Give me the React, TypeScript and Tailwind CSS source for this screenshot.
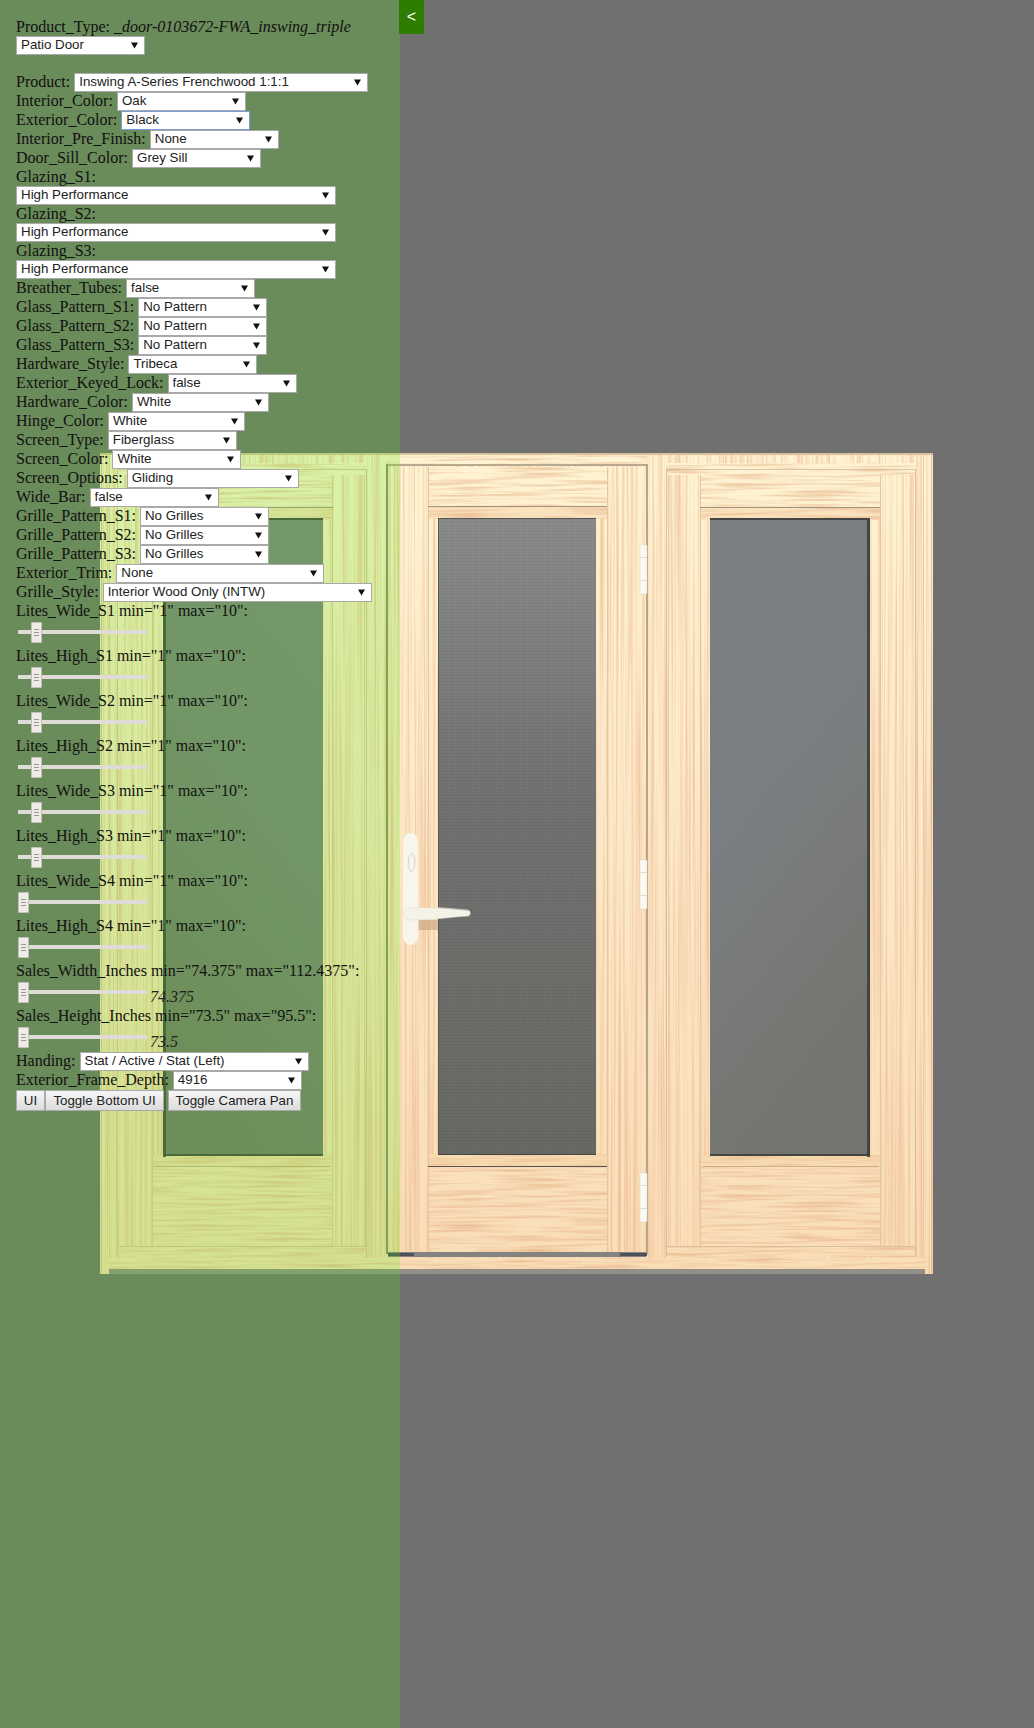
import React from "react";

const ROWS_A = [
  { label: "Interior_Color:", value: "Oak", w: "w-[129px]" },
  { label: "Exterior_Color:", value: "Black", w: "w-[129px]", focus: true },
  { label: "Interior_Pre_Finish:", value: "None", w: "w-[129px]" },
  { label: "Door_Sill_Color:", value: "Grey Sill", w: "w-[129px]" },
];

const ROWS_B = [
  { label: "Breather_Tubes:", value: "false", w: "w-[129px]" },
  { label: "Glass_Pattern_S1:", value: "No Pattern", w: "w-[129px]" },
  { label: "Glass_Pattern_S2:", value: "No Pattern", w: "w-[129px]" },
  { label: "Glass_Pattern_S3:", value: "No Pattern", w: "w-[129px]" },
  { label: "Hardware_Style:", value: "Tribeca", w: "w-[129px]" },
  { label: "Exterior_Keyed_Lock:", value: "false", w: "w-[129px]" },
  { label: "Hardware_Color:", value: "White", w: "w-[137px]" },
  { label: "Hinge_Color:", value: "White", w: "w-[137px]" },
  { label: "Screen_Type:", value: "Fiberglass", w: "w-[129px]" },
  { label: "Screen_Color:", value: "White", w: "w-[129px]" },
  { label: "Screen_Options:", value: "Gliding", w: "w-[172px]" },
  { label: "Wide_Bar:", value: "false", w: "w-[129px]" },
  { label: "Grille_Pattern_S1:", value: "No Grilles", w: "w-[129px]" },
  { label: "Grille_Pattern_S2:", value: "No Grilles", w: "w-[129px]" },
  { label: "Grille_Pattern_S3:", value: "No Grilles", w: "w-[129px]" },
  { label: "Exterior_Trim:", value: "None", w: "w-[208px]" },
  { label: "Grille_Style:", value: "Interior Wood Only (INTW)", w: "w-[269px]" },
];

const SLIDERS = [
  { label: 'Lites_Wide_S1 min="1" max="10":', at: "ml-[13px]" },
  { label: 'Lites_High_S1 min="1" max="10":', at: "ml-[13px]" },
  { label: 'Lites_Wide_S2 min="1" max="10":', at: "ml-[13px]" },
  { label: 'Lites_High_S2 min="1" max="10":', at: "ml-[13px]" },
  { label: 'Lites_Wide_S3 min="1" max="10":', at: "ml-[13px]" },
  { label: 'Lites_High_S3 min="1" max="10":', at: "ml-[13px]" },
  { label: 'Lites_Wide_S4 min="1" max="10":', at: "ml-0" },
  { label: 'Lites_High_S4 min="1" max="10":', at: "ml-0" },
  { label: 'Sales_Width_Inches min="74.375" max="112.4375":', at: "ml-0", value: "74.375" },
  { label: 'Sales_Height_Inches min="73.5" max="95.5":', at: "ml-0", value: "73.5" },
];

function Sel({ value, w, focus }: { value: string; w: string; focus?: boolean }) {
  return (
    <span className={`relative block h-[19px] shrink-0 ${w}`}>
      <select
        defaultValue={value}
        className={`block w-full h-full appearance-none rounded-none bg-white pl-[4px] pb-[2px] leading-[15px] font-['Liberation_Sans',Arial,sans-serif] text-[13.33px] text-[#222] outline-none border ${
          focus ? "border-[#7a9cd6]" : "border-[#a9a9a9]"
        }`}
      >
        <option>{value}</option>
      </select>
      <svg className="absolute right-[7px] top-[6px] w-[7px] h-[7px] pointer-events-none" viewBox="0 0 7 7">
        <path d="M0 0.5h7L3.5 6.5z" fill="#111" />
      </svg>
    </span>
  );
}

function Row({ label, value, w, focus }: { label: string; value: string; w: string; focus?: boolean }) {
  return (
    <div className="flex items-center h-[19px] gap-[4px] whitespace-nowrap">
      <span className="pb-[2px]">{label}</span>
      <Sel value={value} w={w} focus={focus} />
    </div>
  );
}

function Stacked({ label }: { label: string }) {
  return (
    <div>
      <div className="h-[18px] leading-[18px]">{label}</div>
      <Sel value="High Performance" w="w-[320px]" />
    </div>
  );
}

function Slider({ label, at, value }: { label: string; at: string; value?: string }) {
  return (
    <div>
      <div className="h-[18px] leading-[18px] whitespace-nowrap">{label}</div>
      <div className="flex h-[27px] pl-[2px] pt-[2px]">
        <div className="relative w-[129px] h-[21px]">
          <div className="absolute left-0 right-0 top-[8px] h-[4px] bg-[#dfdcd8]" />
          <div
            className={`relative w-[11px] h-[21px] flex flex-col items-center justify-center gap-[2px] rounded-[1px] border border-[#c3c0bb] bg-[#efecE8] ${at}`}
          >
            <span className="block w-[5px] h-px bg-[#9a9895]" />
            <span className="block w-[5px] h-px bg-[#9a9895]" />
            <span className="block w-[5px] h-px bg-[#9a9895]" />
          </div>
        </div>
        {value && <i className="ml-[3px] mt-[6px] h-[18px] leading-[18px] text-[#222]">{value}</i>}
      </div>
    </div>
  );
}

const BTN =
  "h-[21px] border border-[#a9a9a9] bg-gradient-to-b from-[#f6f6f6] to-[#dcdcdc] font-['Liberation_Sans',Arial,sans-serif] text-[13.33px] text-[#222]";

// one side light of the triple door, drawn at its right-hand coordinates
function SideLight({ id }: { id: string }) {
  return (
    <g>
      <g filter={`url(#woodV${id})`}>
        <rect x="647" y="453" width="286" height="821" fill="url(#woodBase)" />
      </g>
      <g filter={`url(#woodH${id})`}>
        <rect x="666" y="463" width="250" height="12" fill="url(#woodBase)" />
        <rect x="700" y="475" width="180" height="32" fill="url(#woodBase)" />
        <rect x="700" y="508" width="180" height="12" fill="#f9e2bc" />
        <rect x="700" y="1155" width="180" height="12" fill="#f8dcb2" />
        <rect x="700" y="1167" width="180" height="79" fill="url(#woodBase)" />
        <rect x="666" y="1246" width="250" height="11" fill="url(#woodBase)" />
      </g>
      <rect x="647" y="453" width="286" height="2" fill="#d9bf9c" />
      <rect x="666" y="469" width="250" height="1" fill="#cdb593" opacity="0.7" />
      <rect x="666" y="470" width="1" height="787" fill="#d8c09c" />
      <rect x="915" y="470" width="1" height="787" fill="#d8c09c" />
      <rect x="668" y="475" width="1" height="771" fill="#e5cba6" />
      <rect x="700" y="475" width="1" height="771" fill="#e2c7a0" />
      <rect x="880" y="475" width="1" height="771" fill="#e2c7a0" />
      <rect x="923" y="455" width="1" height="815" fill="#e5cba6" />
      <rect x="931" y="455" width="1" height="819" fill="#d9bf9c" />
      <rect x="700" y="507" width="180" height="1" fill="#9e9580" />
      <rect x="703" y="1166" width="176" height="1" fill="#c9ae88" />
      <rect x="666" y="1246" width="250" height="1" fill="#d9c09c" />
      <rect x="710" y="520" width="157" height="635" fill={`url(#sideGlass${id})`} />
      <rect x="710" y="518" width="160" height="2" fill="#444" />
      <rect x="867" y="518" width="3" height="639" fill="#444" />
      <rect x="710" y="1154" width="160" height="2" fill="#444" />
    </g>
  );
}

function Door() {
  return (
    <svg className="absolute inset-0 w-[1034px] h-[1728px]" viewBox="0 0 1034 1728">
      <defs>
        {["R", "L"].map((id, i) => (
          <React.Fragment key={id}>
            <filter id={`woodV${id}`} filterUnits="userSpaceOnUse" x="0" y="0" width="1034" height="1728" colorInterpolationFilters="sRGB">
              <feTurbulence type="fractalNoise" baseFrequency="0.42 0.003" numOctaves="2" seed={4 + i} />
              <feColorMatrix values="0 0 0 0 0.92  0 0 0 0 0.68  0 0 0 0 0.52  1.6 0 0 0 -0.68" />
              <feComposite in2="SourceAlpha" operator="in" result="grain" />
              <feMerge>
                <feMergeNode in="SourceGraphic" />
                <feMergeNode in="grain" />
              </feMerge>
            </filter>
            <filter id={`woodH${id}`} filterUnits="userSpaceOnUse" x="0" y="0" width="1034" height="1728" colorInterpolationFilters="sRGB">
              <feTurbulence type="fractalNoise" baseFrequency="0.014 0.36" numOctaves="2" seed={9 + i} />
              <feColorMatrix values="0 0 0 0 0.9  0 0 0 0 0.68  0 0 0 0 0.52  1.6 0 0 0 -0.68" />
              <feComposite in2="SourceAlpha" operator="in" result="grain" />
              <feMerge>
                <feMergeNode in="SourceGraphic" />
                <feMergeNode in="grain" />
              </feMerge>
            </filter>
            <linearGradient id={`sideGlass${id}`} x1="0" y1="0" x2="0.3" y2="1">
              <stop offset="0" stopColor="#7d8083" />
              <stop offset="0.5" stopColor="#7b7e81" />
              <stop offset="1" stopColor="#75756f" />
            </linearGradient>
          </React.Fragment>
        ))}
        <linearGradient id="woodBase" gradientUnits="userSpaceOnUse" x1="0" y1="453" x2="0" y2="1274">
          <stop offset="0" stopColor="#fef3d2" />
          <stop offset="0.5" stopColor="#fce7c6" />
          <stop offset="1" stopColor="#f9deb7" />
        </linearGradient>
        <linearGradient id="doorGlass" x1="0" y1="0" x2="0" y2="1">
          <stop offset="0" stopColor="#8c8c8c" />
          <stop offset="0.45" stopColor="#727272" />
          <stop offset="1" stopColor="#6a6a65" />
        </linearGradient>
        <pattern id="mesh" width="3" height="3" patternUnits="userSpaceOnUse">
          <rect width="3" height="1" fill="#000" opacity="0.04" />
          <rect width="1" height="3" fill="#000" opacity="0.04" />
        </pattern>
      </defs>

      <SideLight id="R" />
      <g transform="translate(1033,0) scale(-1,1)">
        <SideLight id="L" />
      </g>

      {/* active leaf */}
      <g filter="url(#woodVR)">
        <rect x="386" y="453" width="261" height="805" fill="url(#woodBase)" />
      </g>
      <g filter="url(#woodHR)">
        <rect x="386" y="455" width="261" height="10" fill="url(#woodBase)" />
        <rect x="428" y="467" width="179" height="39" fill="url(#woodBase)" />
        <rect x="428" y="507" width="179" height="12" fill="#f9e2bc" />
        <rect x="428" y="1154" width="179" height="12" fill="#f8dcb2" />
        <rect x="428" y="1167" width="179" height="85" fill="url(#woodBase)" />
      </g>
      <rect x="386" y="453" width="261" height="2" fill="#d9bf9c" />
      <rect x="386" y="464" width="261" height="2" fill="#b8a88e" />
      <rect x="386" y="464" width="2" height="790" fill="#8f8a70" />
      <rect x="646" y="464" width="2" height="790" fill="#b8a488" />
      <rect x="428" y="467" width="1" height="785" fill="#e2c7a0" />
      <rect x="607" y="467" width="1" height="785" fill="#e2c7a0" />
      <rect x="428" y="506" width="179" height="1" fill="#9e9580" />
      <rect x="428" y="1166" width="179" height="1" fill="#555" />
      <rect x="438" y="519" width="158" height="635" fill="url(#doorGlass)" />
      <rect x="438" y="519" width="158" height="635" fill="url(#mesh)" />
      <rect x="438" y="518" width="158" height="1" fill="#555" />
      <rect x="438" y="519" width="1" height="635" fill="#555" />
      <rect x="438" y="1154" width="158" height="1" fill="#444" />

      {/* sill */}
      <g filter="url(#woodHR)">
        <rect x="109" y="1258" width="816" height="11" fill="#f9dfb8" />
      </g>
      <rect x="109" y="1269" width="816" height="5" fill="#918f87" />
      <rect x="388" y="1252" width="258" height="5" fill="#85837f" />
      <rect x="388" y="1253" width="26" height="3" fill="#4c4f5c" />
      <rect x="620" y="1253" width="27" height="3" fill="#4c4f5c" />

      {/* hinges */}
      {[545, 860, 1173].map((y) => (
        <g key={y}>
          <rect x="640" y={y} width="7" height="49" rx="1" fill="#fbfaf2" stroke="#dcd8c8" strokeWidth="0.5" />
          <rect x="640" y={y + 12} width="7" height="1" fill="#e0ddd0" />
          <rect x="640" y={y + 35} width="7" height="1" fill="#e0ddd0" />
        </g>
      ))}

      {/* handle */}
      <rect x="418" y="920" width="20" height="10" fill="#b98f6c" opacity="0.45" />
      <path d="M438 907l30 2.500c2 .5 2 3 0 3l-30 0z" fill="#b4b4ac" />
      <path d="M410.500 833c4 0 7 3 7.500 9l.5 90c0 8-3 13-8 13s-8-5-8-13l1-90c.5-6 3-9 7-9z" fill="#f7f6ec" />
      <path d="M409 856l3-3 3 6-1 10-3 3-3-6z" fill="none" stroke="#cfccbe" strokeWidth="0.8" />
      <path d="M407 908c12-1 40 0 62 3 2 .5 1.500 5-1 5-16 1-36 4-60 4-6 0-6-11-1-12z" fill="#f4f3e8" stroke="#dedccf" strokeWidth="0.5" />
    </svg>
  );
}

export default function App() {
  return (
    <div className="relative w-[1034px] h-[1728px] overflow-hidden bg-[#707070]">
      <Door />
      <div className="relative w-[400px] h-[1728px] bg-[rgba(88,238,15,0.22)] pt-[18px] pl-[16px] font-['Liberation_Serif','Times_New_Roman',serif] text-[16px] text-[#111]">
        <div className="absolute top-0 left-[399px] w-[25px] h-[34px] bg-[#2e7d00] flex items-center justify-center font-['Liberation_Sans',Arial,sans-serif] text-[16px] text-white">
          &lt;
        </div>
        <div className="h-[18px] leading-[18px] whitespace-nowrap">
          Product_Type: <i>_door-0103672-FWA_inswing_triple</i>
        </div>
        <Sel value="Patio Door" w="w-[129px]" />
        <div className="h-[18px]" />
        <Row label="Product:" value="Inswing A-Series Frenchwood 1:1:1" w="w-[294px]" />
        {ROWS_A.map((r) => (
          <Row key={r.label} {...r} />
        ))}
        <Stacked label="Glazing_S1:" />
        <Stacked label="Glazing_S2:" />
        <Stacked label="Glazing_S3:" />
        {ROWS_B.map((r) => (
          <Row key={r.label} {...r} />
        ))}
        {SLIDERS.map((s) => (
          <Slider key={s.label} {...s} />
        ))}
        <Row label="Handing:" value="Stat / Active / Stat (Left)" w="w-[229px]" />
        <Row label="Exterior_Frame_Depth:" value="4916" w="w-[129px]" />
        <div className="flex">
          <button className={`${BTN} w-[29px]`}>UI</button>
          <button className={`${BTN} w-[119px]`}>Toggle Bottom UI</button>
          <button className={`${BTN} ml-[4px] w-[133px]`}>Toggle Camera Pan</button>
        </div>
      </div>
    </div>
  );
}
